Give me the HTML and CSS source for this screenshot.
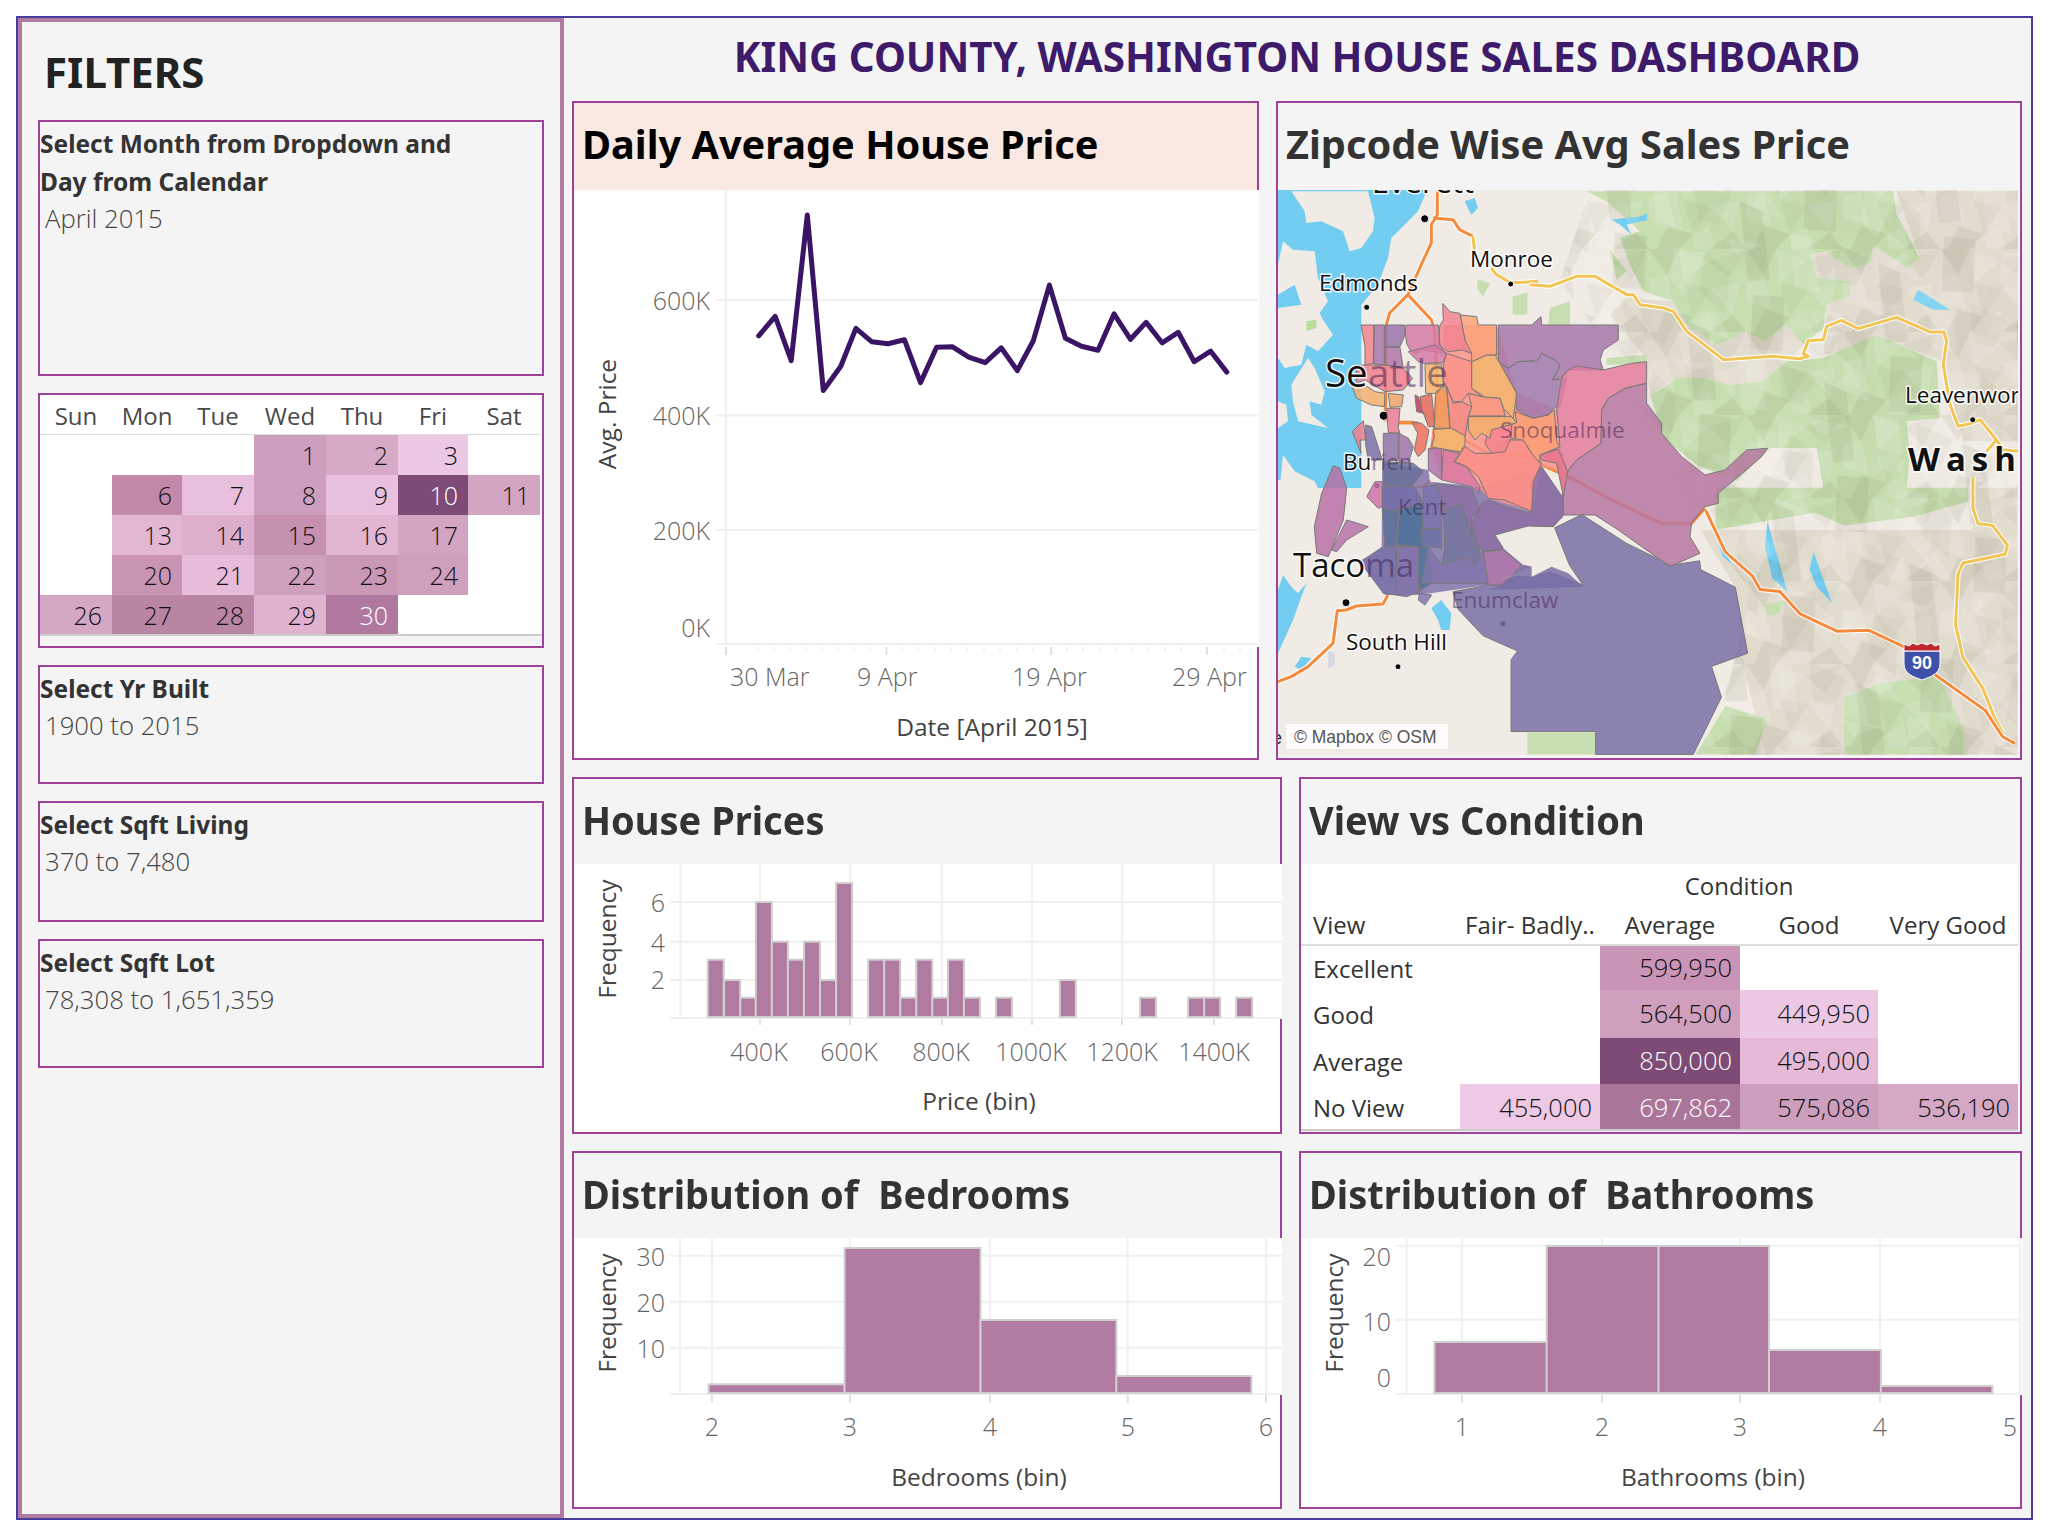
FILE: index.html
```html
<!DOCTYPE html>
<html lang="en">
<head>
<meta charset="utf-8">
<title>King County, Washington House Sales Dashboard</title>
<link rel="stylesheet" href="styles.css">
</head>
<body>
<div class="dashboard">
  <aside class="sidebar">
    <h2 class="filters-title">FILTERS</h2>
    <div class="filter filter-month">
      <div class="filter-label">Select Month from Dropdown and<br>Day from Calendar</div>
      <div class="filter-value">April 2015</div>
    </div>
    <div class="filter filter-cal">
      <div class="calendar">
        <div class="cal-head">Sun</div><div class="cal-head">Mon</div><div class="cal-head">Tue</div><div class="cal-head">Wed</div><div class="cal-head">Thu</div><div class="cal-head">Fri</div><div class="cal-head">Sat</div>
        <div></div><div></div><div></div>
        <div class="day" style="background:#cf9dbd">1</div><div class="day" style="background:#d6aac7">2</div><div class="day" style="background:#ecc8e4">3</div><div></div>
        <div></div>
        <div class="day" style="background:#c289ab">6</div><div class="day" style="background:#e8bfdc">7</div><div class="day" style="background:#cd9ebd">8</div><div class="day" style="background:#e8bfdc">9</div><div class="day day-light" style="background:#7d4b75">10</div><div class="day" style="background:#d4a5c2">11</div>
        <div></div>
        <div class="day" style="background:#e3b6d4">13</div><div class="day" style="background:#dcaecb">14</div><div class="day" style="background:#c690b0">15</div><div class="day" style="background:#e2b5d3">16</div><div class="day" style="background:#d4a5c2">17</div><div></div>
        <div></div>
        <div class="day" style="background:#c994b4">20</div><div class="day" style="background:#e6bcda">21</div><div class="day" style="background:#cfa0be">22</div><div class="day" style="background:#ca97b6">23</div><div class="day" style="background:#d19fbe">24</div><div></div>
        <div class="day" style="background:#d4a7c4">26</div><div class="day" style="background:#ba84a5">27</div><div class="day" style="background:#ba84a5">28</div><div class="day" style="background:#e0b2d0">29</div><div class="day day-light" style="background:#b0789f">30</div><div></div><div></div>
      </div>
    </div>
    <div class="filter filter-yr">
      <div class="filter-label">Select Yr Built</div>
      <div class="filter-value">1900 to 2015</div>
    </div>
    <div class="filter filter-living">
      <div class="filter-label">Select Sqft Living</div>
      <div class="filter-value">370 to 7,480</div>
    </div>
    <div class="filter filter-lot">
      <div class="filter-label">Select Sqft Lot</div>
      <div class="filter-value">78,308 to 1,651,359</div>
    </div>
  </aside>

  <main class="main">
    <h1 class="dash-title">KING COUNTY, WASHINGTON HOUSE SALES DASHBOARD</h1>

    <div class="row row-top">
      <section class="panel panel-daily">
        <header class="panel-head head-accent"><h3 class="panel-title title-top title-black">Daily Average House Price</h3></header>
        <svg class="plot" width="685" height="457" viewBox="574 190 685 457">
          <g class="grid">
            <path d="M726 190V644M716 300H1258M716 415.5H1258M716 530H1258M716 644H1258"/>
          </g>
          <polyline class="trend" points="758.7,335.8 775.2,316.4 791.2,360.7 807.3,214.9 823.3,390.5 840.8,366.2 855.9,328.4 871.9,341.8 888,343.8 904.5,339.8 920.5,382.6 936.6,347.3 952.6,346.8 968.7,357.2 985.2,362.7 1001.2,347.8 1017.3,370.6 1033.3,340.8 1049.4,285.1 1065.4,338.3 1081.5,346.3 1098,350.2 1114,313.9 1130.5,339.3 1146.1,322.4 1162.1,342.8 1178.2,332.3 1194.2,361.7 1210.7,351.2 1226.8,372.1"/>
          <g class="axis-text" text-anchor="end">
            <text x="710" y="310">600K</text>
            <text x="710" y="425">400K</text>
            <text x="710" y="540">200K</text>
            <text x="710" y="637">0K</text>
          </g>
          <text class="axis-name" transform="rotate(-90 607 414)" x="607" y="423" text-anchor="middle">Avg. Price</text>
        </svg>
        <svg class="axis" width="683" height="110" viewBox="574 647 683 110">
          <path class="tick" d="M726 647V655M886.5 647V655M1051 647V655M1207 647V655"/>
          <path class="tick-minor" d="M758 647V651M774 647V651M790 647V651M806 647V651M822 647V651M838 647V651M854 647V651M870 647V651M902 647V651M918 647V651M935 647V651M951 647V651M967 647V651M984 647V651M1000 647V651M1017 647V651M1033 647V651M1067 647V651M1083 647V651M1100 647V651M1116 647V651M1132 647V651M1148 647V651M1165 647V651M1181 647V651M1224 647V651M1240 647V651"/>
          <g class="axis-text">
            <text x="730" y="686">30 Mar</text>
            <text x="857" y="686">9 Apr</text>
            <text x="1012" y="686">19 Apr</text>
            <text x="1172" y="686">29 Apr</text>
          </g>
          <text class="axis-name" x="992" y="736" text-anchor="middle">Date [April 2015]</text>
        </svg>
      </section>

      <section class="panel panel-map">
        <header class="panel-head"><h3 class="panel-title title-top">Zipcode Wise Avg Sales Price</h3></header>
        <svg class="map" width="740" height="565" viewBox="1278 190 740 565">
          <defs>
            <filter id="terrain" x="0" y="0" width="100%" height="100%">
              <feTurbulence type="fractalNoise" baseFrequency=".014 .011" numOctaves="2" seed="11"/>
              <feColorMatrix values="0 0 0 0 .42 0 0 0 0 .41 0 0 0 0 .28 1.7 0 0 0 -.68"/>
              <feComponentTransfer><feFuncA type="discrete" tableValues="0 .03 .06 .09 .12"/></feComponentTransfer>
            </filter>
            <pattern id="facetA" patternUnits="userSpaceOnUse" width="97" height="83">
              <polygon class="fd" points="0,0 30,0 18,26"/>
              <polygon class="fl" points="30,0 60,12 34,34"/>
              <polygon class="fm" points="60,12 97,0 80,30"/>
              <polygon class="fl" points="0,30 18,26 26,60 0,52"/>
              <polygon class="fm" points="34,34 62,40 44,68"/>
              <polygon class="fl" points="62,40 90,34 84,66"/>
              <polygon class="fd" points="18,60 44,68 30,83 8,83"/>
              <polygon class="fd" points="60,83 84,66 97,83"/>
              <polygon class="fl" points="44,70 60,60 66,83 46,83"/>
            </pattern>
            <pattern id="facetB" patternUnits="userSpaceOnUse" width="151" height="131" patternTransform="rotate(24)">
              <polygon class="fd" points="10,0 34,0 70,60 50,70"/>
              <polygon class="fl" points="70,10 92,4 120,50 96,58"/>
              <polygon class="fm" points="110,0 151,0 151,30 130,34"/>
              <polygon class="fm" points="0,60 30,70 44,110 10,100"/>
              <polygon class="fd" points="60,80 90,70 110,120 80,131"/>
              <polygon class="fl" points="120,70 151,60 151,110 130,100"/>
              <polygon class="fl" points="30,110 60,131 20,131"/>
              <polygon class="fl" points="50,30 30,50 10,40"/>
            </pattern>
            <clipPath id="relief"><polygon points="1590,190 2018,190 2018,755 1700,755 1730,680 1750,590 1700,520 1660,440 1610,350 1560,280"/></clipPath>
          </defs>
          <rect class="land" x="1278" y="190" width="740" height="565"/>

          <!-- bare ridges -->
          <g class="ridge" transform="translate(1530 188) scale(.3333)">
            <polygon points="1100,10 1467,10 1467,760 1300,760 1240,520 1110,470 880,500 890,350 960,320 960,280 860,270 840,200 1030,170 1130,240 1170,210"/>
            <polygon points="430,340 470,410 560,470 650,430 700,460 770,410 820,470 770,520 700,580 600,590 520,570 440,570 360,620 340,500 240,380 290,330"/>
          </g>
          <g class="ridge" transform="translate(1270 90) scale(.495 .44)">
            <polygon points="870,1000 1510,1000 1510,1510 1000,1510 950,1280 940,1130"/>
            <polygon points="1420,904 1510,904 1510,1010 1420,1010"/>
          </g>

          <!-- green forests -->
          <g class="forest" transform="translate(1530 188) scale(.3333)">
            <polygon points="170,10 1090,10 1100,80 1170,210 1130,240 1030,170 1020,225 960,240 890,190 840,200 860,270 960,280 960,320 890,350 880,420 820,470 770,410 700,460 650,430 560,470 470,410 430,340 340,310 300,230 270,150 330,130 230,40"/>
            <polygon points="360,620 400,600 440,570 520,570 600,590 700,580 770,520 880,510 1040,440 1110,470 1220,520 1230,690 1130,700 1140,800 1130,900 880,900 860,780 720,780 620,880 500,830 400,750 380,680"/>
            <polygon points="240,185 290,250 260,275 250,230"/>
            <polygon points="60,360 120,340 120,410 55,410"/>
            <polygon points="230,510 350,500 350,530 230,530"/>
          </g>
          <g class="forest" transform="translate(1270 90) scale(.495 .44)">
            <polygon points="900,904 1410,904 1410,935 1300,970 1160,990 1100,960 1000,980 900,1000"/>
            <polygon points="1160,1380 1230,1350 1350,1330 1400,1450 1400,1510 1160,1510"/>
            <polygon points="860,1510 920,1400 1005,1430 980,1510"/>
            <polygon points="520,1460 658,1460 658,1510 520,1510"/>
            <polygon points="1000,1170 1040,1160 1030,1190 1005,1195"/>
            <polygon points="420,430 445,440 430,470 418,450"/>
            <polygon points="490,470 520,460 520,510 490,510"/>
            <polygon points="80,525 95,525 90,548 72,540"/>
          </g>

          <!-- water -->
          <g class="water" transform="translate(1278 188) scale(.3333)">
            <polygon points="0,0 450,0 420,70 380,110 340,150 330,210 300,290 250,350 250,420 250,900 0,900"/>
            <polygon points="560,40 590,30 600,60 580,80"/>
          </g>
          <g class="land" transform="translate(1278 188) scale(.3333)">
            <polygon points="40,10 270,10 290,90 285,130 250,180 215,190 195,130 130,100 85,105 80,70"/>
            <polygon points="15,160 45,185 110,190 120,270 150,340 125,375 135,395 165,440 120,490 85,470 70,530 20,540 0,510 0,230"/>
            <polygon points="0,320 50,290 70,350 0,360" class="water"/>
            <polygon points="90,510 110,540 140,610 130,650 95,640 100,680 150,720 60,700 45,640 40,590"/>
            <polygon points="0,640 25,650 30,700 0,720"/>
            <polygon points="15,800 50,850 110,880 120,900 5,900"/>
          </g>
          <g transform="translate(1278 188) scale(.3333)"><polygon class="park" points="85,400 115,395 115,420 85,430"/></g>
          <g transform="translate(1278 480) scale(.3333)">
            <polygon class="land" points="-5,0 90,0 85,110 90,160 105,290 150,300 200,345 150,350 120,310 60,380 50,440 10,530 -5,530"/>
            <polygon class="water" points="15,285 40,320 60,340 85,310 45,420 0,520 0,330"/>
            <polygon class="land" points="150,300 200,340 260,350 320,350 320,840 -5,840 -5,530 10,530 50,440 60,380 120,310"/>
            <polygon class="water" points="460,385 490,360 520,400 515,450 490,450 480,420"/>
            <polygon class="water" points="50,560 70,530 100,535 70,570"/>
            <polygon class="haze" points="150,510 170,520 170,555 150,565"/>
          </g>
          <g class="water" transform="translate(1530 188) scale(.3333)">
            <polygon points="245,95 335,85 350,75 352,95 290,110 305,140 270,110"/>
            <polygon points="1165,305 1260,365 1210,365 1150,335"/>
          </g>
          <g class="water" transform="translate(1270 90) scale(.495 .44)">
            <polygon points="1005,980 1045,1140 1015,1110 1000,1040"/>
            <polygon points="1098,1050 1135,1165 1105,1130 1090,1090"/>
            <polygon points="900,1010 935,1080 915,1060"/>
          </g>

          <!-- relief -->
          <g clip-path="url(#relief)">
            <rect x="1278" y="190" width="740" height="565" filter="url(#terrain)"/>
            <rect x="1278" y="190" width="740" height="565" fill="url(#facetA)"/>
            <rect x="1278" y="190" width="740" height="565" fill="url(#facetB)"/>
          </g>

          <!-- roads -->
          <g class="casing" transform="translate(1278 188) scale(.3333)">
            <path d="M478,10 L478,80 L460,110 L460,165 L430,230 L390,320 L335,375 L325,410"/>
            <path d="M390,320 L460,395 L470,430"/>
            <path d="M465,90 L525,95 L545,125 L585,145 L590,190"/>
          </g>
          <g class="road-or" transform="translate(1278 188) scale(.3333)">
            <path d="M478,10 L478,80 L460,110 L460,165 L430,230 L390,320 L335,375 L325,410 L322,700"/>
            <path d="M390,320 L460,395 L470,430 L480,640 L460,790"/>
            <path d="M465,90 L525,95 L545,125 L585,145"/>
            <path d="M360,705 L420,705"/>
          </g>
          <g transform="translate(1278 188) scale(.3333)">
            <path class="casing" d="M585,145 L590,190 M640,240 L655,260 L700,285 L780,280"/>
            <path class="road-ye" d="M585,145 L590,190 M640,240 L655,260 L700,285 L780,280"/>
          </g>
          <g transform="translate(1530 188) scale(.3333)">
            <path class="casing" d="M0,290 L60,295 L140,265 L195,265 L290,320 L310,320 L330,350 L400,360 L430,370 L470,430 L580,515 L730,505 L810,512 L835,505 L820,497 L835,458 L880,455 L890,415 L935,397 L985,422 L1100,388 L1200,432 L1242,432 L1250,460 L1240,530 L1250,590 L1260,650 L1285,715 L1320,707 L1350,695 L1395,750 L1420,785 L1467,790 M1400,755 L1370,790"/>
            <path class="road-ye" d="M0,290 L60,295 L140,265 L195,265 L290,320 L310,320 L330,350 L400,360 L430,370 L470,430 L580,515 L730,505 L810,512 L835,505 L820,497 L835,458 L880,455 L890,415 L935,397 L985,422 L1100,388 L1200,432 L1242,432 L1250,460 L1240,530 L1250,590 L1260,650 L1285,715 L1320,707 L1350,695 L1395,750 L1420,785 L1467,790 M1400,755 L1370,790"/>
          </g>
          <g transform="translate(1270 90) scale(.495 .44)">
            <path class="casing" d="M1420,880 L1420,950 L1430,985 L1460,990 L1490,1035 L1485,1055 L1400,1075 L1390,1100 L1385,1215 L1400,1290 L1440,1360 L1465,1430 L1480,1460"/>
            <path class="road-ye" d="M1420,880 L1420,950 L1430,985 L1460,990 L1490,1035 L1485,1055 L1400,1075 L1390,1100 L1385,1215 L1400,1290 L1440,1360 L1465,1430 L1480,1460"/>
            <path class="casing" d="M880,955 L920,1050 L975,1105 L990,1135 L1030,1140 L1070,1190 L1145,1230 L1210,1228 L1280,1265 L1345,1330 L1445,1410 L1480,1470 L1505,1485"/>
            <path class="road-or" d="M880,955 L920,1050 L975,1105 L990,1135 L1030,1140 L1070,1190 L1145,1230 L1210,1228 L1280,1265 L1345,1330 L1445,1410 L1480,1470 L1505,1485"/>
          </g>
          <g transform="translate(1275 290) scale(.3333)">
            <path class="road-or" d="M370,397 L410,397 M560,445 L640,490 L740,495 L800,525 L900,570 L1000,625 L1160,700 L1250,700 L1290,655"/>
          </g>
          <g transform="translate(1278 480) scale(.3333)">
            <path class="casing" d="M455,0 L440,18 L415,22 M330,345 L315,372 L235,378 L205,390 L178,392 L165,490 L90,560 L40,590 L0,605"/>
            <path class="road-or" d="M455,0 L440,18 L415,22 M330,345 L315,372 L235,378 L205,390 L178,392 L165,490 L90,560 L40,590 L0,605"/>
          </g>

          <g class="pin">
            <circle cx="1383.7" cy="415.7" r="4.5"/>
            <circle cx="1420" cy="531.7" r="3"/>
            <circle cx="1560.7" cy="454.7" r="3"/>
            <circle cx="1503" cy="623.7" r="3"/>
            <circle cx="1377" cy="485.7" r="3"/>
          </g>

          <!-- zipcode areas -->
          <g class="zips">
            <g transform="translate(1270 90) scale(.495 .44)">
              <polygon style="fill:#786ea3" points="370,1140 420,1130 500,1105 530,1108 565,1095 632,1125 605,1080 575,995 630,965 720,1030 810,1080 868,1070 870,1090 940,1130 965,1280 892,1310 912,1380 855,1510 658,1510 658,1458 487,1458 487,1295 500,1275 430,1240 380,1180"/>
            </g>
            <g transform="translate(1275 290) scale(.3333)">
              <!-- backing so neighbouring areas meet -->
              <polygon class="zip-back" style="fill:#786ea3" points="680,885 745,825 770,830 770,860 830,830 880,850 925,890 640,900"/>
              <polygon class="zip-back" style="fill:#8274a8" points="465,575 620,590 800,530 865,625 865,680 835,710 760,708 660,735 685,775 745,825 770,830 640,885 430,915 330,915 255,815 320,770 322,515 460,540"/>
              <polygon class="zip-back" style="fill:#f7938a" points="505,105 665,105 725,310 850,360 855,470 880,545 800,530 770,665 640,625 610,590 500,570 470,470 480,310 505,290"/>
              <polygon style="fill:#a676a8" points="670,105 770,105 798,80 800,105 1030,105 1030,150 985,180 975,210 985,240 880,240 860,262 833,270 855,230 845,212 800,190 790,210 730,215 700,235 670,215"/>
              <polygon style="fill:#9d78ab" points="670,215 700,235 730,215 785,215 800,190 845,215 855,225 833,270 875,265 855,350 835,355 820,375 775,385 725,360 720,300"/>
              <polygon style="fill:#e07d9c" points="860,265 880,240 905,228 985,240 1070,220 1115,215 1115,280 1050,295 1000,325 980,360 978,460 900,515 878,545 850,520 800,495 855,470 845,355"/>
              <polygon style="fill:#b4769f" points="1115,280 1115,340 1160,400 1160,430 1220,500 1290,555 1350,540 1415,480 1478,475 1460,500 1390,560 1330,610 1330,640 1290,650 1250,700 1245,740 1275,790 1185,830 1100,770 1030,720 960,675 865,675 860,620 866,600 845,520 878,545 905,510 978,460 980,360 1000,325 1050,295"/>
              <polygon style="fill:#8e70a3" points="600,680 620,640 640,630 690,650 765,670 770,635 770,570 800,530 865,625 865,675 835,710 760,708 660,735 685,775 625,785 590,740 590,700"/>
              <polygon style="fill:#f8908a" points="540,515 570,470 600,490 650,490 700,450 745,450 770,490 800,520 775,575 770,665 690,630 640,625 610,560 575,530"/>
              <polygon style="fill:#f9a078" points="720,365 775,385 820,375 838,360 845,455 855,470 795,495 795,520 770,490 745,450 710,445 710,405 725,395"/>
              <polygon style="fill:#e8788f" points="795,495 850,478 878,545 865,620 845,520 800,510"/>
              <polygon style="fill:#f2868f" points="640,420 690,405 710,405 708,445 690,485 650,490 630,460"/>
              <polygon style="fill:#f2b06e" points="580,380 710,380 725,398 650,420 645,445 620,430 600,450 580,420"/>
              <polygon style="fill:#f3b672" points="590,215 635,195 660,195 675,220 725,310 715,385 685,355 675,325 630,322 590,295"/>
              <polygon style="fill:#f7948a" points="515,190 590,215 590,295 620,320 580,310 560,335 535,335 505,270 505,220"/>
              <polygon style="fill:#f79a83" points="620,320 675,325 685,355 690,378 580,378 590,350 580,310"/>
              <polygon style="fill:#f9a57c" points="555,75 605,80 610,105 665,105 665,195 635,195 590,215 590,190 565,175 570,150"/>
              <polygon style="fill:#ee8593" points="503,40 525,65 555,70 570,150 590,190 560,180 520,185 490,165 495,105 505,90"/>
              <polygon style="fill:#d57aa4" points="395,105 490,105 495,165 510,190 445,180 420,190 405,180 395,160 390,120"/>
              <polygon style="fill:#d47ba6" points="400,185 480,165 515,190 505,218 450,220 430,215"/>
              <polygon style="fill:#ef838f" points="258,105 296,105 296,150 295,220 270,225 270,170"/>
              <polygon style="fill:#a676a8" points="298,105 328,105 328,225 296,222"/>
              <polygon style="fill:#9b74aa" points="330,105 390,105 390,135 375,170 330,170"/>
              <polygon style="fill:#ae76a6" points="330,172 375,172 385,235 330,225"/>
              <polygon style="fill:#ec7f8f" points="245,225 270,225 330,225 385,235 413,265 385,300 330,305 270,270 245,280"/>
              <polygon style="fill:#f2b271" points="225,275 270,285 300,305 330,310 328,350 290,345 245,325"/>
              <polygon style="fill:#f3b672" points="450,222 500,222 505,285 480,310 452,310"/>
              <polygon style="fill:#f0a470" points="340,310 385,315 380,350 345,352"/>
              <polygon style="fill:#c4375d" points="420,315 430,320 445,370 425,365"/>
              <polygon style="fill:#e0695b" points="435,320 470,312 480,410 460,410 440,355"/>
              <polygon style="fill:#ee9b5d" points="482,312 505,290 515,290 525,415 478,415"/>
              <polygon style="fill:#f28d87" points="515,290 535,340 560,335 590,350 580,380 570,440 535,420 525,410"/>
              <polygon style="fill:#f3b66d" points="475,418 530,415 570,437 570,465 555,485 490,475 470,470 478,440"/>
              <polygon style="fill:#e9705e" points="410,395 440,400 462,420 450,480 430,500 418,480 428,430"/>
              <polygon style="fill:#e77c96" points="335,355 375,355 370,415 375,430 340,428"/>
              <polygon style="fill:#ec7f8f" points="232,425 265,392 272,450 255,450 258,490"/>
              <polygon style="fill:#7b70a5" points="272,405 290,410 322,510 280,510 272,465"/>
              <polygon style="fill:#8f72a8" points="325,430 370,430 370,510 325,515"/>
              <polygon style="fill:#a073a9" points="372,430 400,445 415,470 400,520 372,515"/>
              <polygon style="fill:#6a7199" points="325,515 415,520 445,545 410,590 325,585"/>
              <polygon style="fill:#c873a8" points="300,575 322,575 322,650 310,655 275,620"/>
              <polygon style="fill:#736fa4" points="322,588 420,590 445,640 370,660 322,660"/>
              <polygon style="fill:#5d7199" points="322,660 372,660 362,770 330,770"/>
              <polygon style="fill:#4b7096" points="375,660 440,640 445,770 365,765"/>
              <polygon style="fill:#7b74a8" points="445,590 480,585 500,620 500,715 445,715"/>
              <polygon style="fill:#6b72a2" points="435,718 500,718 500,775 440,768"/>
              <polygon style="fill:#75779f" points="505,660 560,640 600,735 615,790 600,825 575,800 500,825 510,775"/>
              <polygon style="fill:#8b70a3" points="480,580 590,595 615,660 590,680 590,740 560,640 505,665 500,620"/>
              <polygon style="fill:#7a74a8" points="255,815 330,770 362,770 362,915 325,910"/>
              <polygon style="fill:#8174a8" points="365,770 432,770 432,905 395,920 362,915"/>
              <polygon style="fill:#4e7397" points="432,770 458,770 473,850 470,880 432,905"/>
              <polygon style="fill:#8276aa" points="460,770 500,825 575,800 600,825 625,780 640,880 610,880 520,880 440,880 425,910 470,915 450,945 430,930"/>
              <polygon style="fill:#b278a9" points="625,785 685,780 740,825 680,885 640,885"/>
              <polygon style="fill:#b571a6" points="175,527 195,535 215,595 205,690 160,800 125,790 118,710 140,610"/>
              <polygon style="fill:#b472a7" points="170,780 195,730 215,690 280,710 215,750 185,785"/>
              <polygon style="fill:#b073ab" points="460,475 500,475 500,570 460,540"/>
              <polygon style="fill:#d878a4" points="505,480 555,490 535,515 575,530 615,590 610,610 590,590 500,570"/>
            </g>
          </g>

          <!-- place labels; the dimmed parts lie under the filled areas in the source map -->
          <g class="place">
            <text x="1423" y="193" text-anchor="middle" class="place-ev">Everett</text>
            <text x="1470" y="267" class="place-md">Monroe</text>
            <text x="1319" y="291" class="place-md">Edmonds</text>
            <text x="1346" y="650" class="place-md">South Hill</text>
            <text x="1905" y="403" class="place-md">Leavenworth</text>
            <text x="1908" y="471" class="place-state">Washington</text>
            <text x="1325" y="387" class="place-xl">Se<tspan class="dim">attle</tspan></text>
            <text x="1343" y="470" class="place-md">Bu<tspan class="dim">rien</tspan></text>
            <text x="1293" y="577" class="place-lg">Taco<tspan class="dim">ma</tspan></text>
            <text x="1398" y="515" class="place-md"><tspan class="dim">Kent</tspan></text>
            <text x="1451" y="608" class="place-md"><tspan class="dim">Enumclaw</tspan></text>
            <text x="1500" y="438" class="place-md"><tspan class="dim">Snoqualmie</tspan></text>
          </g>
          <g class="pin">
            <circle cx="1424.7" cy="218.7" r="4"/>
            <circle cx="1366.7" cy="307.3" r="3"/>
            <circle cx="1510.7" cy="284" r="3"/>
            <circle cx="1346" cy="602.7" r="4"/>
            <circle cx="1398" cy="666.7" r="3"/>
            <circle cx="1972.7" cy="419.7" r="3"/>
          </g>

          <!-- interstate shield -->
          <path class="shield-blue" d="M1904 651H1940V664C1940 674 1930 677 1922 680C1914 677 1904 674 1904 664Z"/>
          <path class="shield-red" d="M1904 651L1904 644L1909 646L1913 643L1917 645L1922 643L1927 645L1931 643L1935 646L1940 644V651Z"/>
          <text class="shield-text" x="1922" y="669" text-anchor="middle">90</text>

          <!-- attribution -->
          <rect class="attr-bg" x="1286" y="724" width="162" height="25"/>
          <text class="attr-cut" x="1272" y="744">e</text>
          <text class="attr" x="1294" y="743">© Mapbox © OSM</text>
        </svg>
      </section>
    </div>

    <div class="row row-mid">
      <section class="panel panel-wide-l">
        <header class="panel-head head-mid"><h3 class="panel-title">House Prices</h3></header>
        <svg class="plot" width="708" height="155" viewBox="574 864 708 155">
          <path class="grid-line" d="M680.5 864V1019M760 864V1019M850 864V1019M942 864V1019M1032 864V1019M1122 864V1019M1214 864V1019M670 902H1282M670 941.7H1282M670 980H1282M670 1018H1282"/>
          <g class="bars">
            <rect x="707.7" y="959.7" width="16" height="57.3"/>
            <rect x="724.2" y="980" width="16" height="37"/>
            <rect x="740.3" y="997.7" width="15.5" height="19.3"/>
            <rect x="755.8" y="902" width="16" height="115"/>
            <rect x="771.9" y="941.7" width="16" height="75.3"/>
            <rect x="787.9" y="959.7" width="16" height="57.3"/>
            <rect x="804" y="941.7" width="16" height="75.3"/>
            <rect x="820" y="980" width="16" height="37"/>
            <rect x="836.1" y="883" width="16" height="134"/>
            <rect x="868.2" y="959.7" width="16" height="57.3"/>
            <rect x="884.2" y="959.7" width="16" height="57.3"/>
            <rect x="900.3" y="997.7" width="16" height="19.3"/>
            <rect x="916.3" y="959.7" width="16" height="57.3"/>
            <rect x="932.3" y="997.7" width="15.6" height="19.3"/>
            <rect x="947.9" y="959.7" width="16" height="57.3"/>
            <rect x="964" y="997.7" width="16" height="19.3"/>
            <rect x="996" y="997.7" width="16" height="19.3"/>
            <rect x="1059.8" y="980" width="16" height="37"/>
            <rect x="1140" y="997.7" width="16" height="19.3"/>
            <rect x="1188.1" y="997.7" width="16" height="19.3"/>
            <rect x="1204.2" y="997.7" width="16" height="19.3"/>
            <rect x="1236.2" y="997.7" width="16" height="19.3"/>
          </g>
          <g class="axis-text" text-anchor="end">
            <text x="665" y="912">6</text>
            <text x="665" y="952">4</text>
            <text x="665" y="989">2</text>
          </g>
          <text class="axis-name" transform="rotate(-90 607 939)" x="607" y="948" text-anchor="middle">Frequency</text>
        </svg>
        <svg class="axis" width="706" height="112" viewBox="574 1019 706 112">
          <path class="tick" d="M760 1019V1025M850 1019V1025M942 1019V1025M1032 1019V1025M1122 1019V1025M1214 1019V1025"/>
          <g class="axis-text" text-anchor="middle">
            <text x="759" y="1061">400K</text>
            <text x="849" y="1061">600K</text>
            <text x="941" y="1061">800K</text>
            <text x="1031" y="1061">1000K</text>
            <text x="1122" y="1061">1200K</text>
            <text x="1214" y="1061">1400K</text>
          </g>
          <text class="axis-name" x="979" y="1110" text-anchor="middle">Price (bin)</text>
        </svg>
      </section>

      <section class="panel panel-wide-r">
        <header class="panel-head head-mid"><h3 class="panel-title">View vs Condition</h3></header>
        <div class="table-wrap">
          <table class="crosstab">
            <colgroup><col class="col-view"><col class="col-a"><col class="col-a"><col class="col-b"><col class="col-a"></colgroup>
            <thead>
              <tr class="tr-top"><th></th><th colspan="4" class="th-group">Condition</th></tr>
              <tr class="tr-head"><th class="th-left">View</th><th>Fair- Badly..</th><th>Average</th><th>Good</th><th>Very Good</th></tr>
            </thead>
            <tbody>
              <tr class="tr-1"><th class="th-left">Excellent</th><td></td><td class="val" style="background:#c994b5">599,950</td><td></td><td></td></tr>
              <tr class="tr-2"><th class="th-left">Good</th><td></td><td class="val" style="background:#d09fbe">564,500</td><td class="val" style="background:#ecc8e4">449,950</td><td></td></tr>
              <tr class="tr-3"><th class="th-left">Average</th><td></td><td class="val val-light" style="background:#7d4b75">850,000</td><td class="val" style="background:#e5b9d7">495,000</td><td></td></tr>
              <tr class="tr-4"><th class="th-left">No View</th><td class="val" style="background:#eec9e6">455,000</td><td class="val val-light" style="background:#ab7599">697,862</td><td class="val" style="background:#cd9ebd">575,086</td><td class="val" style="background:#d5a8c5">536,190</td></tr>
            </tbody>
          </table>
        </div>
      </section>
    </div>

    <div class="row row-bot">
      <section class="panel panel-wide-l">
        <header class="panel-head head-mid"><h3 class="panel-title">Distribution of&nbsp; Bedrooms</h3></header>
        <svg class="plot" width="708" height="157" viewBox="574 1238 708 157">
          <path class="grid-line" d="M680 1238V1395M712 1238V1395M850 1238V1395M990 1238V1395M1127.7 1238V1395M1266 1238V1395M670 1255.7H1282M670 1301.7H1282M670 1347.7H1282M670 1394H1282"/>
          <g class="bars">
            <rect x="708.7" y="1384.3" width="135.9" height="8.7"/>
            <rect x="844.6" y="1248" width="135.9" height="145"/>
            <rect x="980.5" y="1320" width="135.9" height="73"/>
            <rect x="1116.4" y="1376" width="135" height="17"/>
          </g>
          <g class="axis-text" text-anchor="end">
            <text x="665" y="1266">30</text>
            <text x="665" y="1312">20</text>
            <text x="665" y="1358">10</text>
          </g>
          <text class="axis-name" transform="rotate(-90 607 1313)" x="607" y="1322" text-anchor="middle">Frequency</text>
        </svg>
        <svg class="axis" width="706" height="112" viewBox="574 1395 706 112">
          <path class="tick" d="M712 1395V1403M850 1395V1403M990 1395V1403M1127.7 1395V1403M1266 1395V1403"/>
          <g class="axis-text" text-anchor="middle">
            <text x="712" y="1436">2</text>
            <text x="850" y="1436">3</text>
            <text x="990" y="1436">4</text>
            <text x="1128" y="1436">5</text>
            <text x="1266" y="1436">6</text>
          </g>
          <text class="axis-name" x="979" y="1486" text-anchor="middle">Bedrooms (bin)</text>
        </svg>
      </section>

      <section class="panel panel-wide-r">
        <header class="panel-head head-mid"><h3 class="panel-title">Distribution of&nbsp; Bathrooms</h3></header>
        <svg class="plot" width="721" height="157" viewBox="1301 1238 721 157">
          <path class="grid-line" d="M1406.5 1238V1395M1462 1238V1395M1602 1238V1395M1740 1238V1395M1880 1238V1395M2020 1238V1395M1396 1245.7H2020M1396 1319.7H2020M1396 1394H2020"/>
          <g class="bars">
            <rect x="1434.4" y="1342" width="112.3" height="51"/>
            <rect x="1546.7" y="1246" width="111.9" height="147"/>
            <rect x="1658.6" y="1246" width="110.4" height="147"/>
            <rect x="1769" y="1350" width="111.9" height="43"/>
            <rect x="1880.9" y="1386" width="111.4" height="7"/>
          </g>
          <g class="axis-text" text-anchor="end">
            <text x="1391" y="1266">20</text>
            <text x="1391" y="1331">10</text>
            <text x="1391" y="1387">0</text>
          </g>
          <text class="axis-name" transform="rotate(-90 1334 1313)" x="1334" y="1322" text-anchor="middle">Frequency</text>
        </svg>
        <svg class="axis" width="719" height="112" viewBox="1301 1395 719 112">
          <path class="tick" d="M1462 1395V1403M1602 1395V1403M1740 1395V1403M1880 1395V1403"/>
          <g class="axis-text" text-anchor="middle">
            <text x="1462" y="1436">1</text>
            <text x="1602" y="1436">2</text>
            <text x="1740" y="1436">3</text>
            <text x="1880" y="1436">4</text>
            <text x="2010" y="1436">5</text>
          </g>
          <text class="axis-name" x="1713" y="1486" text-anchor="middle">Bathrooms (bin)</text>
        </svg>
      </section>
    </div>
  </main>
</div>
</body>
</html>
```
FILE: styles.css
```css
* { box-sizing: border-box; }
html, body { margin: 0; padding: 0; background: #fff; }
body { font-family: "Open Sans", "Noto Sans", "Liberation Sans", sans-serif; color: #333; }

.dashboard {
  margin: 16px;
  width: 2017px;
  height: 1504px;
  border: 2px solid #473d9c;
  background: #f4f4f4;
  display: flex;
}

/* sidebar */
.sidebar {
  width: 546px;
  flex: none;
  border: 4px solid #b07aa1;
  padding: 0 16px;
  display: flex;
  flex-direction: column;
  gap: 17px;
}
.filters-title {
  margin: 0 0 -17px;
  height: 98px;
  flex: none;
  padding: 25px 0 0 6px;
  font: 700 42px/50px "Noto Sans", sans-serif;
  color: #222;
}
.filter { border: 2px solid #a0429a; flex: none; }
.filter-month { height: 256px; }
.filter-cal { height: 255px; }
.filter-yr { height: 119px; }
.filter-living { height: 121px; }
.filter-lot { height: 129px; }
.filter-label { font: 700 24.5px/38px "Noto Sans", sans-serif; color: #333; padding: 3px 0 0 0; white-space: nowrap; }
.filter-value { font: 300 25.7px/36px "Open Sans", sans-serif; color: #444; padding-left: 5px; }

.calendar {
  display: grid;
  grid-template-columns: 72px 70px 72px 72px 72px 70px 72px;
  grid-template-rows: 40px 40px 40px 40px 40px 39px;
  background: #fff;
  width: 502px;
  border-bottom: 2px solid #ccc;
  height: 241px;
}
.cal-head { text-align: center; font: 400 24px/41px "Open Sans", sans-serif; color: #4a4a4a; border-bottom: 1px solid #ddd; }
.day { text-align: right; padding-right: 10px; font: 300 25px/40px "Open Sans", sans-serif; color: #111; }
.day-light { color: #fff; }

/* main */
.main {
  flex: 1;
  padding: 0 9px 0 8px;
  display: flex;
  flex-direction: column;
  gap: 17px;
}
.dash-title {
  margin: 0 0 -17px;
  height: 82.5px;
  flex: none;
  padding-top: 12px;
  text-align: center;
  font: 700 40.4px/54px "Noto Sans", sans-serif;
  color: #3d1a6a;
  white-space: nowrap;
}
.row { display: flex; gap: 17px; flex: none; }
.row-top { height: 659px; }
.row-mid { height: 357px; }
.row-bot { height: 358.5px; }

.panel {
  border: 2px solid #a0429a;
  background: #fff;
  display: flex;
  flex-direction: column;
  flex: none;
}
.panel-daily { width: 687px; }
.panel-map { width: 746px; background: #f4f4f4; }
.panel-wide-l { width: 710px; }
.panel-wide-r { width: 723px; }

.panel-head { height: 87.5px; background: #f4f4f4; padding: 15px 0 0 8px; flex: none; }
.head-accent { background: #f9e9e2; }
.head-mid { height: 85.5px; padding-top: 15px; }
.panel-title { margin: 0; font: 700 38px/52px "Noto Sans", sans-serif; color: #333; white-space: nowrap; }
.title-top { font-size: 39.7px; }
.title-black { color: #000; }
.head-mid .panel-title { font-size: 40px; transform: scaleX(.95); transform-origin: left center; }

/* charts */
.plot { display: block; background: #fff; flex: none; position: relative; }
.axis { display: block; flex: none; }
.grid path, .grid-line { fill: none; stroke: #f0f0f0; stroke-width: 2; }
.trend { fill: none; stroke: #3a1566; stroke-width: 5; stroke-linecap: round; stroke-linejoin: round; }
.tick { stroke: #e2e2e2; stroke-width: 2; fill: none; }
.tick-minor { stroke: #e8e8e8; stroke-width: 1; fill: none; }
.axis-text { font: 300 25px "Open Sans", sans-serif; fill: #666; }
.axis-name { font: 400 24.5px "Open Sans", sans-serif; fill: #444; }
.bars rect { fill: #b07aa1; stroke: #cfcfcf; stroke-width: 2; }

/* table */
.table-wrap { flex: 1; background: #f4f4f4; display: flex; }
.crosstab {
  width: 717px;
  height: 266px;
  table-layout: fixed;
  border-collapse: collapse;
  background: #fff;
  font-size: 25.5px;
  font-weight: 300;
  color: #333;
}
.col-view { width: 159px; }
.col-a { width: 140px; }
.col-b { width: 138px; }
.crosstab th { font-weight: 400; padding: 0; white-space: nowrap; color: #333; font-size: 24px; }
.crosstab td { padding: 0 8px 2px 0; }
.th-left { text-align: left; padding-left: 12px !important; }
.th-group { padding-top: 2px !important; }
.tr-top { height: 40px; }
.tr-head { height: 41px; border-bottom: 2px solid #ddd; }
.tr-1 { height: 45px; }
.tr-2 { height: 48px; }
.tr-3 { height: 46px; }
.tr-4 { height: 46px; border-bottom: 2px solid #ccc; }
.tr-4 th, .tr-4 td { padding-top: 2px; }
.val { text-align: right; color: #111; }
.val-light { color: #fff; }

/* map */
.map { display: block; flex: none; margin-right: 0; }
.land { fill: #f0ebe4; }
.ridge { fill: #e2dccf; }
.water, .water polygon { fill: #72cdf1; }
.forest { fill: #c6deb0; }
.park { fill: #b9e09a; }
.haze { fill: #d5d8e2; }
.fd { fill: #5e5a3c; fill-opacity: .085; }
.fm { fill: #5e5a3c; fill-opacity: .05; }
.fl { fill: #fff; fill-opacity: .12; }
.casing, .casing path { fill: none; stroke: #fff; stroke-width: 5px; stroke-linejoin: round; vector-effect: non-scaling-stroke; }
.road-or, .road-or path { fill: none; stroke: #f58a3c; stroke-width: 3px; stroke-linejoin: round; vector-effect: non-scaling-stroke; }
.road-ye { fill: none; stroke: #f1c453; stroke-width: 3px; stroke-linejoin: round; vector-effect: non-scaling-stroke; }
.zips { filter: saturate(1.05); }
.zips polygon { stroke: #777; stroke-width: 1px; fill-opacity: .84; stroke-linejoin: round; vector-effect: non-scaling-stroke; }
.zips .zip-back { stroke: none; }
.place text { font-family: "Open Sans", sans-serif; fill: #111; stroke: #fff; stroke-width: 3; paint-order: stroke; stroke-opacity: .85; }
.place .dim { fill: #3c1e50; fill-opacity: .5; stroke: none; }
.place-md { font-size: 22.5px; }
.place-ev { font-size: 31px; }
.place-lg { font-size: 33px; }
.place-xl { font-size: 38.5px; }
.place-state { font-size: 33px; font-weight: 700; letter-spacing: 6px; }
.pin { fill: #000; stroke: #fff; stroke-width: 1; }
.shield-blue { fill: #3f50a8; stroke: #fff; stroke-width: 1; }
.shield-red { fill: #c0282d; stroke: #fff; stroke-width: 1; }
.shield-text { font: 700 18px "Liberation Sans", sans-serif; fill: #fff; }
.attr-bg { fill: #fff; fill-opacity: .85; }
.attr { font: 400 17.5px "Liberation Sans", sans-serif; fill: #555; }
.attr-cut { font: 400 18px "Liberation Sans", sans-serif; fill: #333; }
```
